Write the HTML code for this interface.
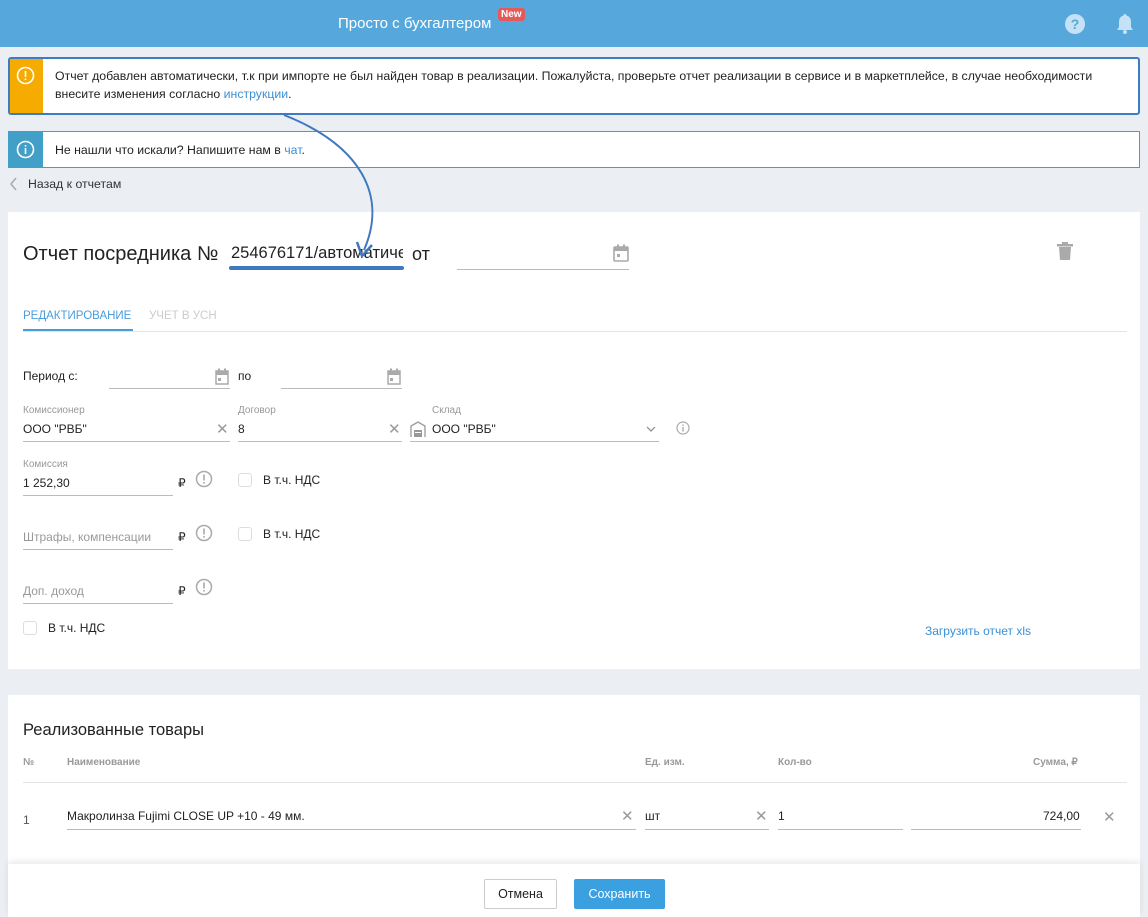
<!DOCTYPE html>
<html><head><meta charset="utf-8">
<style>
*{margin:0;padding:0;box-sizing:border-box}
body{width:1148px;height:917px;overflow:hidden;background:#ebeef2;font-family:"Liberation Sans",sans-serif;color:#222;position:relative;font-size:12px}
.a{position:absolute}
.hdr{left:0;top:0;width:1148px;height:47px;background:#55a7dc}
.card{background:#fff}
.lbl{font-size:10px;color:#999}
.line{border-bottom:1px solid #bbb}
.gray{color:#999}
.cb{width:14px;height:14px;border:1px solid #ddd;border-radius:3px;background:#fff}
.x{color:#999;font-size:15px}
.hd{font-size:10px;color:#999;font-weight:bold}
</style></head><body>
<div class="a hdr"></div>
<div class="a" style="left:338px;top:15px;color:#fff;font-size:15px">Просто с бухгалтером</div>
<div class="a" style="left:498px;top:8px;background:#e35a5a;color:#fff;font-size:10px;font-weight:bold;padding:1px 3px;border-radius:3px">New</div>
<svg class="a" style="left:1065px;top:14px" width="20" height="20"><circle cx="10" cy="10" r="10" fill="#c5e1f5"/><text x="10" y="15" text-anchor="middle" font-family="Liberation Sans" font-weight="bold" font-size="14" fill="#55a7dc">?</text></svg>
<svg class="a" style="left:1115px;top:13px" width="20" height="22"><path d="M10 1c-1 0-1.5.7-1.5 1.5C5 3.5 4 6 4 9v5l-2 3h16l-2-3V9c0-3-1-5.5-4.5-6.5C11.5 1.7 11 1 10 1z" fill="#c5e1f5"/><circle cx="10" cy="19" r="2" fill="#c5e1f5"/></svg>

<div class="a" style="left:8px;top:57px;width:1132px;height:58px;border:2px solid #3d7cc4;border-radius:3px;background:#fff"></div>
<div class="a" style="left:10px;top:59px;width:33px;height:54px;background:#f5ab00"></div>
<svg class="a" style="left:16px;top:66px" width="19" height="19"><circle cx="9.5" cy="9.5" r="8" fill="none" stroke="#fff" stroke-width="1.6"/><rect x="8.7" y="5" width="1.6" height="6" fill="#fff"/><rect x="8.7" y="12.5" width="1.6" height="1.6" fill="#fff"/></svg>
<div class="a" style="left:55px;top:67px;font-size:12.3px;line-height:18px;width:1080px">Отчет добавлен автоматически, т.к при импорте не был найден товар в реализации. Пожалуйста, проверьте отчет реализации в сервисе и в маркетплейсе, в случае необходимости внесите изменения согласно <span style="color:#3a8fd6">инструкции</span>.</div>

<div class="a" style="left:8px;top:131px;width:1132px;height:37px;border:1px solid #42a0c8;background:#fff"></div>
<div class="a" style="left:8px;top:131px;width:35px;height:37px;background:#42a0c8"></div>
<svg class="a" style="left:16px;top:140px" width="19" height="19"><circle cx="9.5" cy="9.5" r="8" fill="none" stroke="#fff" stroke-width="1.6"/><rect x="8.7" y="8" width="1.6" height="6" fill="#fff"/><rect x="8.7" y="5" width="1.6" height="1.6" fill="#fff"/></svg>
<div class="a" style="left:55px;top:143px;font-size:12.3px">Не нашли что искали? Напишите нам в <span style="color:#3a8fd6">чат</span>.</div>

<svg class="a" style="left:8px;top:176px" width="12" height="16"><path d="M8 2L3 8l5 6" fill="none" stroke="#aaa" stroke-width="1.5"/></svg>
<div class="a" style="left:28px;top:177px;font-size:12.3px;color:#333">Назад к отчетам</div>

<div class="a card" style="left:8px;top:212px;width:1132px;height:457px"></div>
<div class="a" style="left:23px;top:243px;font-size:20px;color:#222">Отчет посредника №</div>
<div class="a" style="left:231px;top:244px;font-size:16.5px;color:#222;width:172px;overflow:hidden;white-space:nowrap">254676171/автоматически</div>
<div class="a" style="left:229px;top:266px;width:175px;height:4px;background:#3d78c0;border-radius:2px"></div>
<div class="a" style="left:412px;top:244px;font-size:18px">от</div>
<div class="a line" style="left:457px;top:269px;width:172px"></div>
<svg class="a" style="left:613px;top:244px" width="16" height="18"><rect x="1" y="3" width="14" height="14" rx="1" fill="none" stroke="#aaa" stroke-width="1.6"/><rect x="1" y="3" width="14" height="4" fill="#aaa"/><rect x="4" y="0.5" width="2" height="4" fill="#aaa"/><rect x="10" y="0.5" width="2" height="4" fill="#aaa"/><rect x="4" y="10" width="3" height="3" fill="#aaa"/></svg>
<svg class="a" style="left:1057px;top:242px" width="16" height="18"><rect x="0" y="2" width="16" height="2.5" fill="#aaa"/><rect x="5" y="0" width="6" height="3" fill="#aaa"/><path d="M2 5h12l-1 13H3z" fill="#aaa"/></svg>

<svg class="a" style="left:0;top:100px" width="420" height="180"><path d="M284 15 C 360 45, 388 95, 364 150" fill="none" stroke="#3d78c0" stroke-width="2"/><path d="M357 142 L362 156 L372 145" fill="none" stroke="#3d78c0" stroke-width="2.5"/></svg>

<div class="a" style="left:23px;top:310px;font-size:11.5px;color:#4a9ddb">РЕДАКТИРОВАНИЕ</div>
<div class="a" style="left:23px;top:329px;width:110px;height:2px;background:#4a9ddb"></div>
<div class="a" style="left:149px;top:310px;font-size:11.5px;color:#ccc">УЧЕТ В УСН</div>
<div class="a" style="left:23px;top:331px;width:1104px;height:1px;background:#e4e4e4"></div>

<div class="a" style="left:23px;top:369px;font-size:12px">Период с:</div>
<div class="a line" style="left:109px;top:388px;width:121px"></div>
<div class="a" style="left:238px;top:369px;font-size:12px">по</div>
<div class="a line" style="left:281px;top:388px;width:121px"></div>
<svg class="a" style="left:215px;top:368px" width="14" height="17"><rect x="1" y="3" width="12" height="13" fill="none" stroke="#aaa" stroke-width="1.5"/><rect x="1" y="3" width="12" height="4" fill="#aaa"/><rect x="3" y="0.5" width="2" height="4" fill="#aaa"/><rect x="9" y="0.5" width="2" height="4" fill="#aaa"/><rect x="3" y="10" width="3" height="3" fill="#aaa"/></svg>
<svg class="a" style="left:387px;top:368px" width="14" height="17"><rect x="1" y="3" width="12" height="13" fill="none" stroke="#aaa" stroke-width="1.5"/><rect x="1" y="3" width="12" height="4" fill="#aaa"/><rect x="3" y="0.5" width="2" height="4" fill="#aaa"/><rect x="9" y="0.5" width="2" height="4" fill="#aaa"/><rect x="3" y="10" width="3" height="3" fill="#aaa"/></svg>

<div class="a lbl" style="left:23px;top:405px">Комиссионер</div>
<div class="a" style="left:23px;top:422px">ООО "РВБ"</div>
<div class="a x" style="left:216px;top:420px">✕</div>
<div class="a line" style="left:23px;top:441px;width:207px"></div>
<div class="a lbl" style="left:238px;top:405px">Договор</div>
<div class="a" style="left:238px;top:422px">8</div>
<div class="a x" style="left:388px;top:420px">✕</div>
<div class="a line" style="left:238px;top:441px;width:164px"></div>
<div class="a lbl" style="left:432px;top:405px">Склад</div>
<svg class="a" style="left:410px;top:421px" width="16" height="17"><path d="M1 16V5l7-4 7 4v11" fill="none" stroke="#999" stroke-width="1.3"/><rect x="4" y="9" width="8" height="7" fill="#999"/><rect x="5" y="11" width="6" height="1" fill="#fff"/></svg>
<div class="a" style="left:432px;top:422px">ООО "РВБ"</div>
<svg class="a" style="left:646px;top:426px" width="10" height="6"><path d="M1 1l4 4 4-4" fill="none" stroke="#888" stroke-width="1.2"/></svg>
<div class="a line" style="left:410px;top:441px;width:249px"></div>
<svg class="a" style="left:676px;top:421px" width="14" height="14"><circle cx="7" cy="7" r="6" fill="none" stroke="#aaa" stroke-width="1.2"/><rect x="6.3" y="6" width="1.4" height="4.5" fill="#aaa"/><rect x="6.3" y="3.5" width="1.4" height="1.4" fill="#aaa"/></svg>

<div class="a lbl" style="left:23px;top:459px">Комиссия</div>
<div class="a" style="left:23px;top:476px">1 252,30</div>
<div class="a line" style="left:23px;top:495px;width:150px"></div>
<div class="a" style="left:178px;top:476px;font-size:12px">₽</div>
<div class="a" style="left:178px;top:530px;font-size:12px">₽</div>
<div class="a" style="left:178px;top:584px;font-size:12px">₽</div>
<svg class="a" style="left:195px;top:470px" width="18" height="18"><circle cx="9" cy="9" r="7.5" fill="none" stroke="#aaa" stroke-width="1.5"/><rect x="8.2" y="4.5" width="1.6" height="6" fill="#aaa"/><rect x="8.2" y="12" width="1.6" height="1.6" fill="#aaa"/></svg>
<svg class="a" style="left:195px;top:524px" width="18" height="18"><circle cx="9" cy="9" r="7.5" fill="none" stroke="#aaa" stroke-width="1.5"/><rect x="8.2" y="4.5" width="1.6" height="6" fill="#aaa"/><rect x="8.2" y="12" width="1.6" height="1.6" fill="#aaa"/></svg>
<svg class="a" style="left:195px;top:578px" width="18" height="18"><circle cx="9" cy="9" r="7.5" fill="none" stroke="#aaa" stroke-width="1.5"/><rect x="8.2" y="4.5" width="1.6" height="6" fill="#aaa"/><rect x="8.2" y="12" width="1.6" height="1.6" fill="#aaa"/></svg>
<div class="a cb" style="left:238px;top:473px"></div>
<div class="a" style="left:263px;top:473px">В т.ч. НДС</div>
<div class="a cb" style="left:238px;top:527px"></div>
<div class="a" style="left:263px;top:527px">В т.ч. НДС</div>
<div class="a gray" style="left:23px;top:530px">Штрафы, компенсации</div>
<div class="a line" style="left:23px;top:549px;width:150px"></div>
<div class="a gray" style="left:23px;top:584px">Доп. доход</div>
<div class="a line" style="left:23px;top:603px;width:150px"></div>
<div class="a cb" style="left:23px;top:621px"></div>
<div class="a" style="left:48px;top:621px">В т.ч. НДС</div>
<div class="a" style="left:925px;top:624px;color:#3a8fd6">Загрузить отчет xls</div>

<div class="a card" style="left:8px;top:695px;width:1132px;height:180px"></div>
<div class="a" style="left:23px;top:721px;font-size:16.5px;color:#222">Реализованные товары</div>
<div class="a hd" style="left:23px;top:757px">№</div>
<div class="a hd" style="left:67px;top:757px">Наименование</div>
<div class="a hd" style="left:645px;top:757px">Ед. изм.</div>
<div class="a hd" style="left:778px;top:757px">Кол-во</div>
<div class="a hd" style="left:1033px;top:757px">Сумма, ₽</div>
<div class="a" style="left:23px;top:782px;width:1104px;height:1px;background:#e4e4e4"></div>
<div class="a" style="left:23px;top:813px;color:#555">1</div>
<div class="a" style="left:67px;top:809px">Макролинза Fujimi CLOSE UP +10 - 49 мм.</div>
<div class="a x" style="left:621px;top:807px">✕</div>
<div class="a line" style="left:67px;top:829px;width:569px"></div>
<div class="a" style="left:645px;top:809px">шт</div>
<div class="a x" style="left:755px;top:807px">✕</div>
<div class="a line" style="left:645px;top:829px;width:124px"></div>
<div class="a" style="left:778px;top:809px">1</div>
<div class="a line" style="left:778px;top:829px;width:125px"></div>
<div class="a" style="left:1043px;top:809px">724,00</div>
<div class="a line" style="left:911px;top:829px;width:170px"></div>
<div class="a x" style="left:1103px;top:808px">✕</div>

<div class="a" style="left:8px;top:864px;width:1132px;height:53px;background:#fff;box-shadow:0 -3px 6px rgba(0,0,0,0.08)"></div>
<div class="a" style="left:484px;top:879px;width:73px;height:30px;border:1px solid #ccc;border-radius:2px;background:#fff;text-align:center;line-height:28px;font-size:12.5px">Отмена</div>
<div class="a" style="left:574px;top:879px;width:91px;height:30px;background:#3aa0e0;border-radius:2px;color:#fff;text-align:center;line-height:30px;font-size:12.5px">Сохранить</div>
</body></html>
